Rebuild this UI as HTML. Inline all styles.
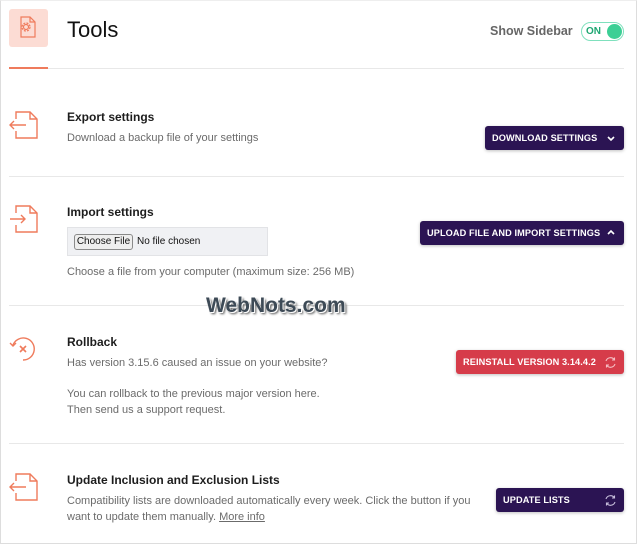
<!DOCTYPE html>
<html><head><style>
*{margin:0;padding:0;box-sizing:border-box}
body{width:637px;height:544px;background:#fff;font-family:"Liberation Sans",sans-serif;position:relative;overflow:hidden}
.frame{position:absolute;left:0;top:0;width:637px;height:544px;border:1px solid #ddd;border-top:1px solid #eee}
.a{position:absolute}
.hr{position:absolute;left:9px;width:615px;height:1px;background:#e8e8e8}
.t{position:absolute;left:67px;font-size:12px;font-weight:bold;color:#1d1d1d}
.d{position:absolute;left:67px;font-size:11px;color:#6b6b6b;line-height:16px}
.btn{position:absolute;height:24px;border-radius:3px;background:#2b1453;color:#fff;font-size:9.2px;font-weight:bold;letter-spacing:.1px;padding-left:7px;display:flex;align-items:center;box-shadow:0 1px 3px rgba(0,0,0,.25)}
.btn svg{position:absolute;right:7px;top:6px}
</style></head><body>
<div class="frame"></div>
<div class="a" style="left:9px;top:9px;width:39px;height:38px;background:#fcdcd4;border-radius:3px"></div>
<svg class="a" style="left:18px;top:15px" width="22" height="24" viewBox="0 0 22 24" fill="none" stroke="#ef7b5c" stroke-width="1.2"><path d="M3 2h9l5 5v15H3z"/><path d="M12 2v5h5"/><circle cx="8" cy="12" r="2.5"/><circle cx="8" cy="12" r="4" stroke-dasharray="2 1.2"/></svg>
<div class="a" style="left:67px;top:17px;font-size:22px;color:#111">Tools</div>
<div class="a" style="left:490px;top:24px;font-size:12.5px;font-weight:bold;color:#666">Show Sidebar</div>
<div class="a" style="left:581px;top:22px;width:43px;height:19px;border:1.5px solid #7fe0bd;border-radius:10px"></div>
<div class="a" style="left:586px;top:26px;font-size:10px;font-weight:bold;color:#1ea672">ON</div>
<div class="a" style="left:607px;top:24px;width:15px;height:15px;border-radius:50%;background:#3ccf95"></div>
<div class="hr" style="top:68px"></div>
<div class="a" style="left:9px;top:67px;width:39px;height:2px;background:#ef7b5c"></div>

<svg class="a" style="left:8px;top:110px" width="32" height="30" viewBox="0 0 32 30" fill="none" stroke="#ef7b5c" stroke-width="1.4"><path d="M8 9V2h14l7 7v19H8v-7"/><path d="M22 2v7h7"/><path d="M18 15H2M6 11l-4 4 4 4"/></svg>
<div class="t" style="top:110px">Export settings</div>
<div class="d" style="top:130px">Download a backup file of your settings</div>
<div class="btn" style="left:485px;top:126px;width:139px">DOWNLOAD SETTINGS<svg width="12" height="12" viewBox="0 0 12 12"><path d="M3 5l3 3 3-3" stroke="#fff" stroke-width="1.6" fill="none"/></svg></div>
<div class="hr" style="top:176px"></div>

<svg class="a" style="left:8px;top:204px" width="32" height="30" viewBox="0 0 32 30" fill="none" stroke="#ef7b5c" stroke-width="1.4"><path d="M8 9V2h14l7 7v19H8v-7"/><path d="M22 2v7h7"/><path d="M2 15h15M13 11l4 4-4 4"/></svg>
<div class="t" style="top:205px">Import settings</div>
<div class="a" style="left:67px;top:227px;width:201px;height:29px;background:#f0f1f4;border:1px solid #e2e3e6"></div>
<div class="a" style="left:74px;top:234px;width:59px;height:16px;background:#eee;border:1px solid #8a8a8a;border-radius:3px;font-size:10px;line-height:14px;text-align:center;color:#111">Choose File</div>
<div class="a" style="left:137px;top:236px;font-size:10px;color:#111">No file chosen</div>
<div class="d" style="top:264px">Choose a file from your computer (maximum size: 256 MB)</div>
<div class="btn" style="left:420px;top:221px;width:204px">UPLOAD FILE AND IMPORT SETTINGS<svg width="12" height="12" viewBox="0 0 12 12"><path d="M3 7l3-3 3 3" stroke="#fff" stroke-width="1.6" fill="none"/></svg></div>
<div class="hr" style="top:305px"></div>
<div class="a" style="left:206px;top:294px;font-size:21px;font-weight:bold;color:#3d4a56;text-shadow:1px 1px 0 #fff,2px 2px 2px #555">WebNots.com</div>

<svg class="a" style="left:8px;top:335px" width="32" height="28" viewBox="0 0 32 28" fill="none" stroke="#ef7b5c" stroke-width="1.4"><path d="M5 10A11 11 0 1 1 15 25"/><path d="M2 8l3 3 3-3"/><path d="M12 11l6 6M18 11l-6 6" stroke-width="1.6"/></svg>
<div class="t" style="top:335px">Rollback</div>
<div class="d" style="top:355px">Has version 3.15.6 caused an issue on your website?</div>
<div class="d" style="top:386px">You can rollback to the previous major version here.</div>
<div class="d" style="top:402px">Then send us a support request.</div>
<div class="btn" style="left:456px;top:350px;width:168px;background:#d63c4a">REINSTALL VERSION 3.14.4.2<svg width="13" height="13" viewBox="0 0 13 13" fill="none" stroke="#f5c0c5" stroke-width="1.1"><path d="M2 5a4.7 4.7 0 0 1 8.5-1M11 8a4.7 4.7 0 0 1-8.5 1"/><path d="M10.5 1.5v2.5H8M2.5 11.5V9H5"/></svg></div>
<div class="hr" style="top:443px"></div>

<svg class="a" style="left:8px;top:472px" width="32" height="30" viewBox="0 0 32 30" fill="none" stroke="#ef7b5c" stroke-width="1.4"><path d="M8 9V2h14l7 7v19H8v-7"/><path d="M22 2v7h7"/><path d="M18 15H2M6 11l-4 4 4 4"/></svg>
<div class="t" style="top:473px">Update Inclusion and Exclusion Lists</div>
<div class="d" style="top:493px">Compatibility lists are downloaded automatically every week. Click the button if you</div>
<div class="d" style="top:509px">want to update them manually. <span style="text-decoration:underline">More info</span></div>
<div class="btn" style="left:496px;top:488px;width:128px">UPDATE LISTS<svg width="13" height="13" viewBox="0 0 13 13" fill="none" stroke="#c9c0dd" stroke-width="1.1"><path d="M2 5a4.7 4.7 0 0 1 8.5-1M11 8a4.7 4.7 0 0 1-8.5 1"/><path d="M10.5 1.5v2.5H8M2.5 11.5V9H5"/></svg></div>
</body></html>
